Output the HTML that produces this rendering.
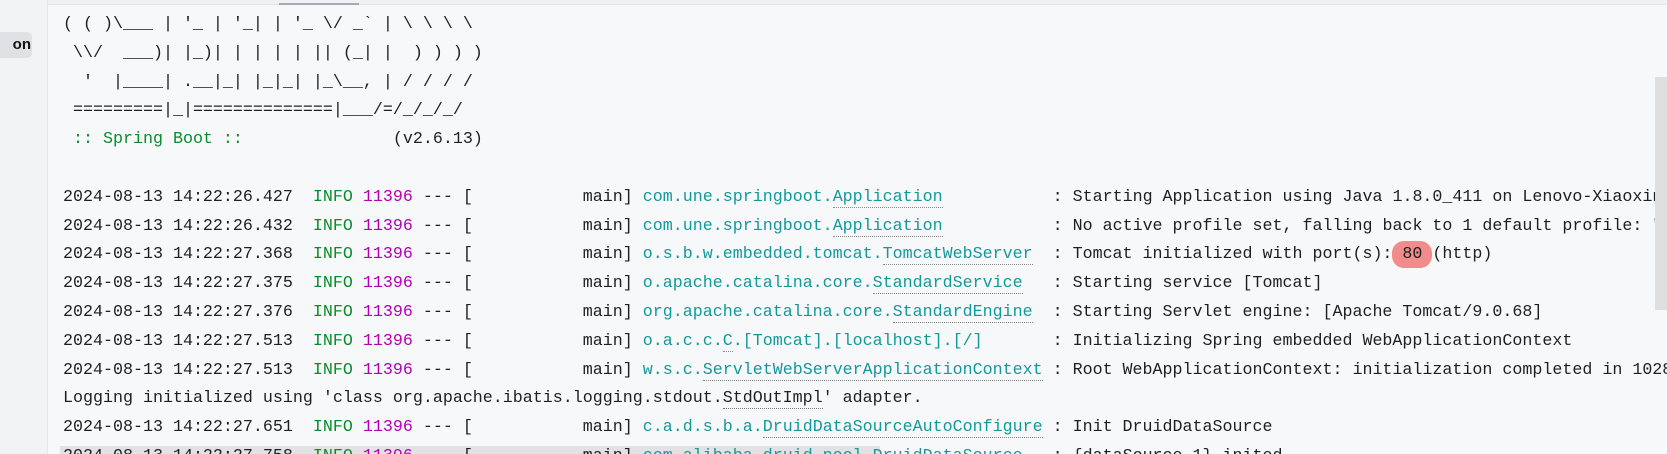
<!DOCTYPE html>
<html><head><meta charset="utf-8"><style>
html,body{margin:0;padding:0;width:1667px;height:454px;overflow:hidden;background:#f7f8fa;}
#wrap{position:relative;width:1667px;height:454px;overflow:hidden;}
#side{position:absolute;left:0;top:0;width:47px;height:454px;background:#f2f3f5;border-right:1px solid #e4e5e8;}
#badge{position:absolute;left:0;top:32px;width:32px;height:26px;background:#dfe1e5;border-radius:0 5px 5px 0;font:bold 15px "Liberation Sans",sans-serif;color:#111;line-height:26px;text-align:right;padding-right:1px;box-sizing:border-box;overflow:hidden;}
#top{position:absolute;left:48px;top:0;width:1619px;height:4px;background:#f0f1f3;border-bottom:1px solid #e2e3e6;}
#thumb{position:absolute;left:231px;top:3px;width:80px;height:2px;background:#a3abba;}
#vs{position:absolute;left:1655px;top:77px;width:12px;height:233px;background:#dfdfe0;}
pre{position:absolute;left:63px;top:11px;margin:0;font-family:"Liberation Mono",monospace;font-size:16.67px;line-height:28.8px;color:#1e1f22;white-space:pre;}
.g{color:#0a8c2c}.m{color:#b100b3}.t{color:#14999a}.u{border-bottom:1.5px dotted #888;}
.ud{border-bottom:1.5px dotted #777;}
.hl{background:#f28b8b;border-radius:12px;padding:4px 0;}
.row{position:absolute;left:60px;top:446px;width:820px;height:28px;background:#e2e2e4;}
</style></head><body><div id="wrap">
<div id="side"><div id="badge">on</div></div>
<div id="top"><div id="thumb"></div></div>
<div class="row"></div>
<pre>( ( )\___ | '_ | '_| | '_ \/ _` | \ \ \ \
 \\/  ___)| |_)| | | | | || (_| |  ) ) ) )
  '  |____| .__|_| |_|_| |_\__, | / / / /
 =========|_|==============|___/=/_/_/_/
<span class="g"> :: Spring Boot ::</span>               (v2.6.13)

2024-08-13 14:22:26.427  <span class="g">INFO</span> <span class="m">11396</span> --- [           main] <span class="t">com.une.springboot.<span class="u">Application</span>          </span> : Starting Application using Java 1.8.0_411 on Lenovo-Xiaoxin
2024-08-13 14:22:26.432  <span class="g">INFO</span> <span class="m">11396</span> --- [           main] <span class="t">com.une.springboot.<span class="u">Application</span>          </span> : No active profile set, falling back to 1 default profile: "d
2024-08-13 14:22:27.368  <span class="g">INFO</span> <span class="m">11396</span> --- [           main] <span class="t">o.s.b.w.embedded.tomcat.<span class="u">TomcatWebServer</span> </span> : Tomcat initialized with port(s):<span class="hl"> 80 </span>(http)
2024-08-13 14:22:27.375  <span class="g">INFO</span> <span class="m">11396</span> --- [           main] <span class="t">o.apache.catalina.core.<span class="u">StandardService</span>  </span> : Starting service [Tomcat]
2024-08-13 14:22:27.376  <span class="g">INFO</span> <span class="m">11396</span> --- [           main] <span class="t">org.apache.catalina.core.<span class="u">StandardEngine</span> </span> : Starting Servlet engine: [Apache Tomcat/9.0.68]
2024-08-13 14:22:27.513  <span class="g">INFO</span> <span class="m">11396</span> --- [           main] <span class="t">o.a.c.c.<span class="u">C</span>.[Tomcat].[localhost].[/]      </span> : Initializing Spring embedded WebApplicationContext
2024-08-13 14:22:27.513  <span class="g">INFO</span> <span class="m">11396</span> --- [           main] <span class="t">w.s.c.<span class="u">ServletWebServerApplicationContext</span></span> : Root WebApplicationContext: initialization completed in 1028
Logging initialized using 'class org.apache.ibatis.logging.stdout.<span class="ud">StdOutImpl</span>' adapter.
2024-08-13 14:22:27.651  <span class="g">INFO</span> <span class="m">11396</span> --- [           main] <span class="t">c.a.d.s.b.a.<span class="u">DruidDataSourceAutoConfigure</span></span> : Init DruidDataSource
2024-08-13 14:22:27.758  <span class="g">INFO</span> <span class="m">11396</span> --- [           main] <span class="t">com.alibaba.druid.pool.<span class="u">DruidDataSource</span>  </span> : {dataSource-1} inited</pre>
<div id="vs"></div>
</div></body></html>
